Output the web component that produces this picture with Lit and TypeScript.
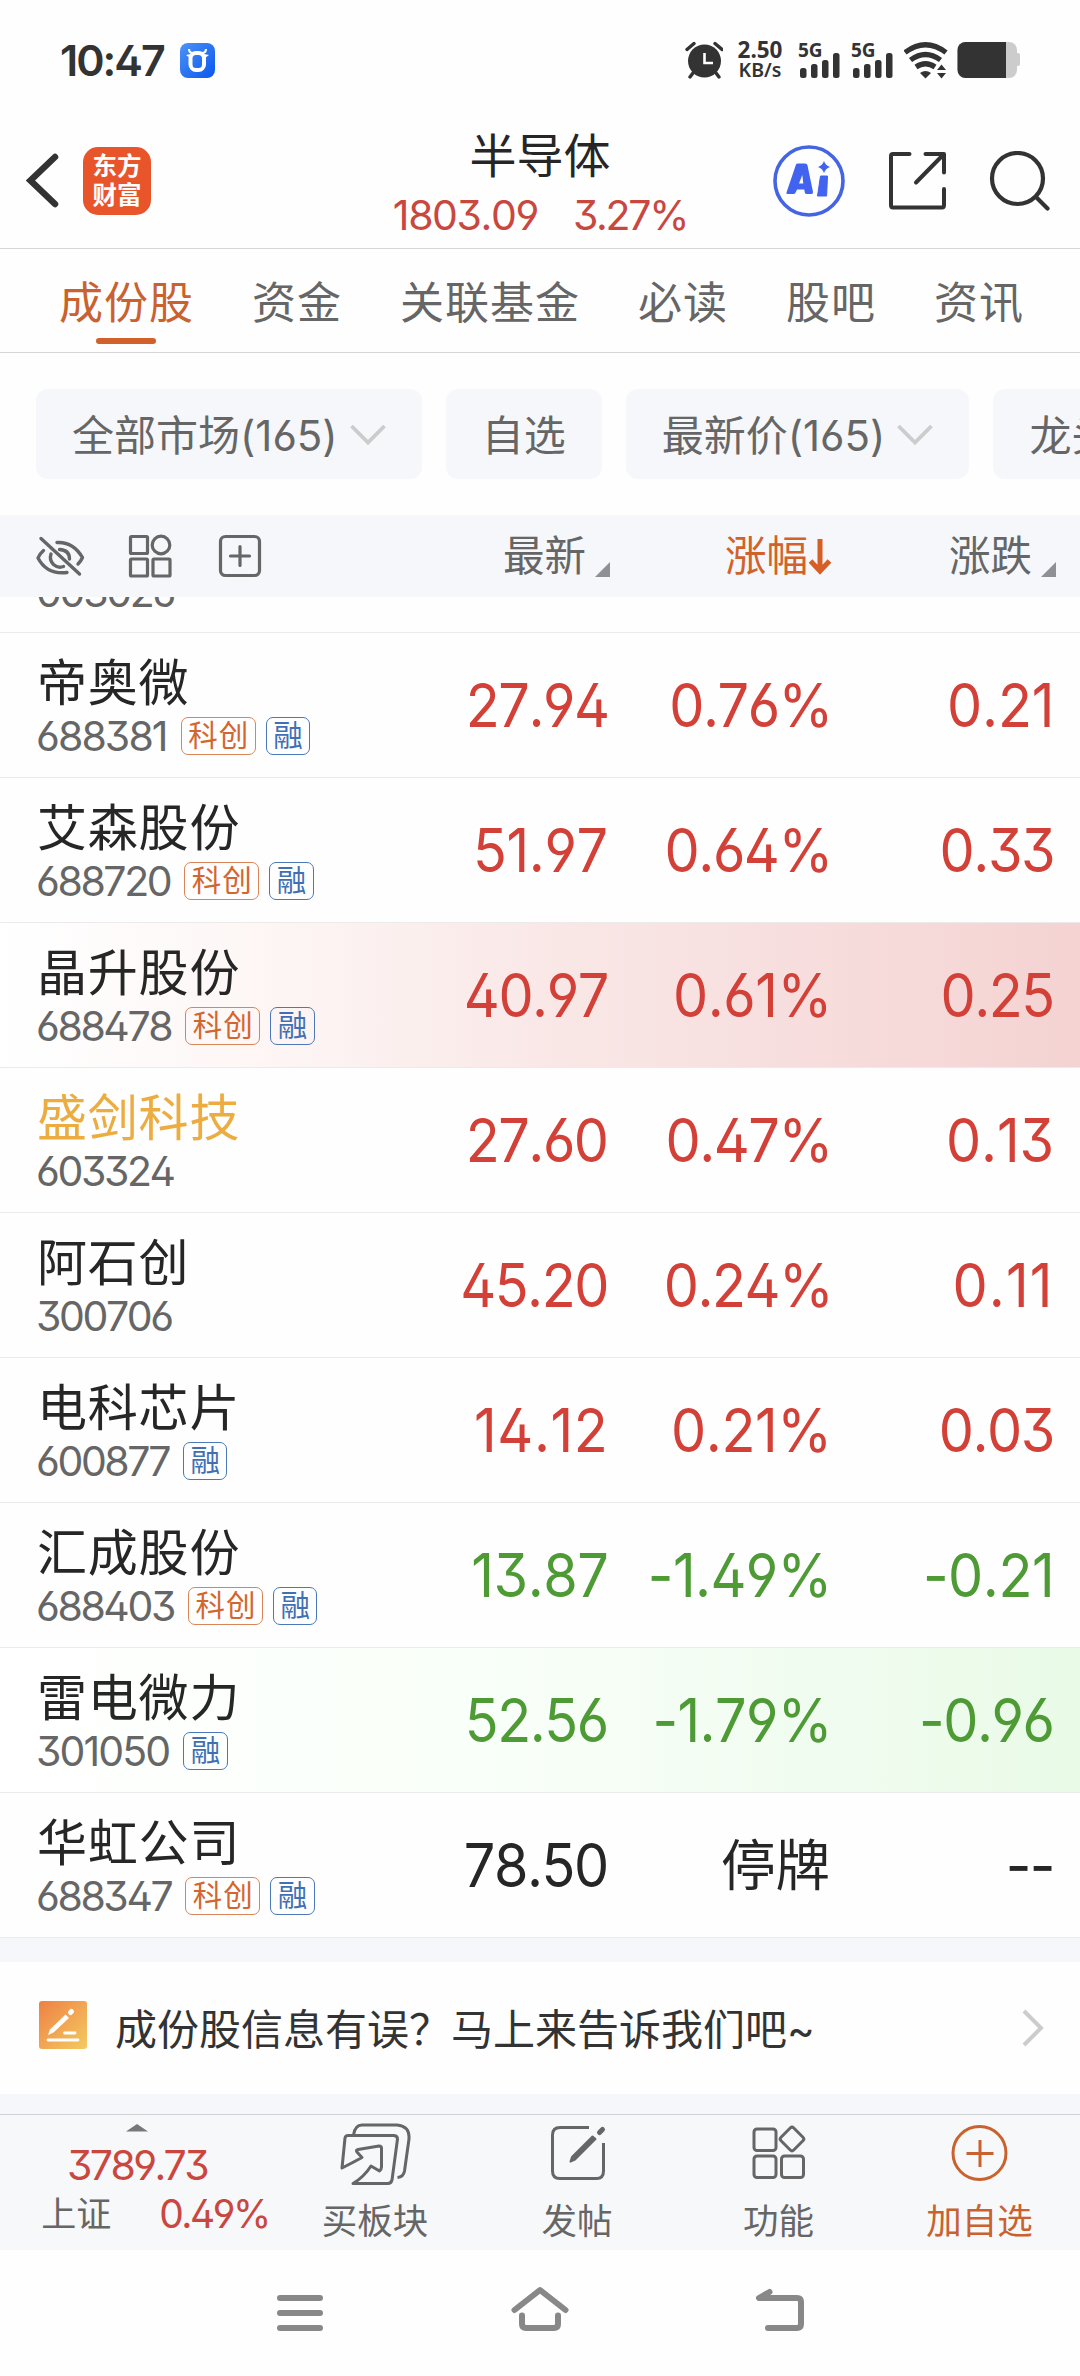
import { LitElement, html, css, svg, nothing } from "lit";
import { customElement, property } from "lit/decorators.js";
import { classMap } from "lit/directives/class-map.js";
import { styleMap } from "lit/directives/style-map.js";

type Trend = "up" | "down" | "flat";

interface Stock {
  name: string;
  code: string;
  tags: string[];
  price: string;
  percent: string;
  change: string;
  trend: Trend;
  watched?: boolean;
  flash?: boolean;
}

const STOCKS: Stock[] = [
  { name: "帝奥微", code: "688381", tags: ["科创", "融"], price: "27.94", percent: "0.76%", change: "0.21", trend: "up" },
  { name: "艾森股份", code: "688720", tags: ["科创", "融"], price: "51.97", percent: "0.64%", change: "0.33", trend: "up" },
  { name: "晶升股份", code: "688478", tags: ["科创", "融"], price: "40.97", percent: "0.61%", change: "0.25", trend: "up", flash: true },
  { name: "盛剑科技", code: "603324", tags: [], price: "27.60", percent: "0.47%", change: "0.13", trend: "up", watched: true },
  { name: "阿石创", code: "300706", tags: [], price: "45.20", percent: "0.24%", change: "0.11", trend: "up" },
  { name: "电科芯片", code: "600877", tags: ["融"], price: "14.12", percent: "0.21%", change: "0.03", trend: "up" },
  { name: "汇成股份", code: "688403", tags: ["科创", "融"], price: "13.87", percent: "-1.49%", change: "-0.21", trend: "down" },
  { name: "雷电微力", code: "301050", tags: ["融"], price: "52.56", percent: "-1.79%", change: "-0.96", trend: "down", flash: true },
  { name: "华虹公司", code: "688347", tags: ["科创", "融"], price: "78.50", percent: "停牌", change: "--", trend: "flat" },
];

const TABS = ["成份股", "资金", "关联基金", "必读", "股吧", "资讯"];

const FILTERS = [
  { label: "全部市场(165)", menu: true },
  { label: "自选", menu: false },
  { label: "最新价(165)", menu: true },
  { label: "龙头股", menu: false },
];

// The figure "1" is set narrow, so strings that hold it are tracked wider.
const tracking = (text: string, start: number, perOne: number) => {
  const ones = text.split("1").length - 1;
  return { letterSpacing: `${(start + (perOne * ones) / text.length).toFixed(2)}px` };
};

const base = css`
  :host {
    display: block;
    font-family: Inter, "Noto Sans CJK SC", sans-serif;
    font-feature-settings: "ss01", "calt" 0;
    font-kerning: none;
  }
  * {
    box-sizing: border-box;
  }
  svg {
    display: block;
    flex: none;
  }
`;

@customElement("status-bar")
class StatusBar extends LitElement {
  static styles = [
    base,
    css`
      .bar {
        height: 120px;
        display: flex;
        align-items: center;
        padding: 0 60px 0 60px;
        color: #333;
      }
      .time {
        font-size: 43px;
        font-weight: 600;
        letter-spacing: -2px;
        width: 120px;
        white-space: nowrap;
      }
      .right {
        margin-left: auto;
        display: flex;
        align-items: center;
      }
      .speed {
        width: 48px;
        margin: 0 14px 0 13px;
        display: flex;
        flex-direction: column;
        align-items: center;
        font-weight: 700;
        font-family: "Noto Sans", sans-serif;
        line-height: 20px;
        font-size: 22.5px;
      }
      .unit {
        font-size: 19.5px;
        font-weight: 600;
      }
      .cell {
        font-family: "Noto Sans", sans-serif;
        font-weight: 700;
        font-size: 19px;
        overflow: visible;
      }
    `,
  ];

  private signal() {
    return html`<svg class="cell" width="53" height="38" viewBox="798 41 53 38">
      <text x="798" y="56.500" fill="#333">5G</text>
      <g fill="#333">
        <rect x="800" y="68" width="6.5" height="10" rx="2.5" />
        <rect x="811" y="64" width="6.5" height="14" rx="2.5" />
        <rect x="822" y="60" width="6.5" height="18" rx="2.5" />
        <rect x="833" y="53" width="6.5" height="25" rx="2.5" />
      </g>
    </svg>`;
  }

  render() {
    return html`<div class="bar">
      <span class="time">10:47</span>
      <svg width="35" height="35" viewBox="0 0 35 35">
        <defs>
          <linearGradient id="g" x1="0" y1="0" x2="1" y2="1">
            <stop offset="0" stop-color="#4c93f8" />
            <stop offset="1" stop-color="#0a57ee" />
          </linearGradient>
        </defs>
        <rect width="35" height="35" rx="8" fill="url(#g)" />
        <rect x="10.5" y="10" width="13.5" height="17" rx="5.5" fill="none" stroke="#fff" stroke-width="4" />
        <path d="M9 6 Q9 10 13 10 M26 6 Q26 10 22 10" stroke="#fff" stroke-width="2.2" fill="none" />
        <path d="M6 12 L11 11 L10 15 Z M29 12 L24 11 L25 15 Z" fill="#fff" />
      </svg>
      <div class="right">
        <svg width="38" height="38" viewBox="684 41 38 38">
          <circle cx="703.5" cy="61" r="16.5" fill="#333" />
          <path d="M703.5 53 V63 H712" stroke="#fff" stroke-width="2.6" fill="none" />
          <path d="M686 49.5 L693 43.5 M721 49.5 L714 43.5 M692 73 L689 77 M715 73 L718 77" stroke="#333" stroke-width="3.4" stroke-linecap="round" />
        </svg>
        <div class="speed"><span>2.50</span><span class="unit">KB/s</span></div>
        ${this.signal()}${this.signal()}
        <svg width="116" height="38" viewBox="904 41 116 38">
          <g fill="none" stroke="#333" stroke-width="5.2">
            <path d="M905 52.500 Q925.500 37 946 52.500" />
            <path d="M910.500 60 Q925.500 49 940.500 60" />
            <path d="M916 67 Q925.500 60.500 935 67" />
          </g>
          <path d="M920 73 Q925.500 69 931 73 L925.500 78.500 Z" fill="#333" />
          <path d="M937 70 L941.500 64.500 L946 70 Z M937 73 L941.500 78.500 L946 73 Z" fill="#333" />
          <rect x="957.500" y="42" width="59.500" height="36" rx="8" fill="#ccc" />
          <rect x="1015" y="53" width="5" height="13" rx="2" fill="#ccc" />
          <path d="M1006 42 V78 H965.500 a8 8 0 0 1 -8 -8 V50 a8 8 0 0 1 8 -8 Z" fill="#333" />
        </svg>
      </div>
    </div>`;
  }
}

@customElement("board-header")
class BoardHeader extends LitElement {
  static styles = [
    base,
    css`
      .bar {
        height: 129px;
        border-bottom: 1px solid #d6d6d6;
        display: grid;
        grid-template-columns: 1fr auto 1fr;
        align-items: center;
      }
      .left {
        display: flex;
        align-items: center;
        padding: 0 0 6px 26px;
        gap: 23px;
      }
      .logo {
        width: 68px;
        height: 68px;
        border-radius: 15px;
        background: #e9552b;
        color: #fff;
        font-size: 24.5px;
        line-height: 29px;
        font-weight: 700;
        display: flex;
        flex-direction: column;
        align-items: center;
        justify-content: center;
      }
      .mid {
        display: flex;
        flex-direction: column;
        align-items: center;
        padding-top: 2px;
      }
      .title {
        font-size: 47px;
        line-height: 58px;
        color: #262626;
      }
      .quote {
        display: flex;
        gap: 35px;
        color: #c9473f;
        font-size: 41px;
        line-height: 56px;
        letter-spacing: -1.4px;
        margin-top: 2px;
      }
      .gain {
        letter-spacing: -2.3px;
      }
      .right {
        display: flex;
        justify-content: flex-end;
        align-items: center;
        padding: 0 29px 6px 0;
        gap: 43px;
      }
    `,
  ];

  render() {
    return html`<div class="bar">
      <div class="left">
        <svg width="34" height="60" viewBox="26 152 34 60">
          <path d="M55 158 L30.500 181.500 L55 205" fill="none" stroke="#333" stroke-width="6.500" stroke-linecap="round" />
        </svg>
        <div class="logo"><span>东方</span><span>财富</span></div>
      </div>
      <div class="mid">
        <span class="title">半导体</span>
        <div class="quote"><span>1803.09</span><span class="gain">3.27%</span></div>
      </div>
      <div class="right">
        <svg width="72" height="72" viewBox="0 0 72 72">
          <circle cx="36" cy="36" r="34" fill="none" stroke="#4464e4" stroke-width="3.6" />
          <g fill="#4163f0">
            <path fill-rule="evenodd" d="M14 46 L23 19.500 Q23.500 18.500 25 18.500 H32 Q34 18.500 34.400 20 L40 47 Q40.300 49 38.500 49 H34 Q32 49 31.800 47.500 L31.300 44.500 H24 L22.600 47.500 Q22 49 20.300 49 H14.500 Q12.700 49 14 46 Z M26 38.500 H30.300 L29.300 30 Z" />
            <path d="M47.500 31 H54.500 L53.600 51 H44.500 Z" stroke="#4163f0" stroke-width="1" stroke-linejoin="round" />
            <path d="M51 16 Q52.500 20.500 57 22 Q52.500 23.500 51 28 Q49.500 23.500 45 22 Q49.500 20.500 51 16 Z" />
          </g>
        </svg>
        <svg width="58" height="60" viewBox="887 152 58 60">
          <g fill="none" stroke="#333" stroke-width="4" stroke-linecap="round" stroke-linejoin="round">
            <path d="M908.500 155 H892 Q890 155 890 157 V206 Q890 208.500 892 208.500 H941 Q943 208.500 943 206 V190" />
            <path d="M924.500 155 H943 V173.500 M942 156 L915 183.500" />
          </g>
        </svg>
        <svg width="62" height="60" viewBox="990 151 62 60">
          <g fill="none" stroke="#333" stroke-width="4.200" stroke-linecap="round">
            <circle cx="1018.500" cy="178.500" r="25.500" />
            <path d="M1037 197 L1048.500 208.500" />
          </g>
        </svg>
      </div>
    </div>`;
  }
}

@customElement("board-filters")
class BoardFilters extends LitElement {
  static styles = [
    base,
    css`
      .tabs {
        height: 104px;
        display: flex;
        gap: 58px;
        padding-left: 59px;
        border-bottom: 1px solid #d6d6d6;
        white-space: nowrap;
      }
      .tab {
        display: flex;
        flex-direction: column;
        align-items: center;
        font-size: 44px;
        letter-spacing: 1px;
        line-height: 64px;
        padding-top: 22px;
        color: #666;
      }
      .active {
        color: #c9622f;
      }
      .active::after {
        content: "";
        width: 60px;
        height: 6px;
        border-radius: 3px;
        background: #d2602b;
        margin: 3px 2px 0 0;
      }
      .chips {
        display: flex;
        gap: 24px;
        padding: 36px 0 36px 36px;
        overflow: hidden;
      }
      .chip {
        flex: none;
        height: 90px;
        border-radius: 12px;
        background: #f6f7fa;
        padding: 3px 36px 0 36px;
        display: flex;
        align-items: center;
        gap: 12px;
        font-size: 42px;
        line-height: 60px;
        color: #666;
      }
      .label {
        white-space: nowrap;
      }
    `,
  ];

  render() {
    return html`
      <div class="tabs">
        ${TABS.map((t, i) => html`<div class=${classMap({ tab: true, active: i === 0 })}>${t}</div>`)}
      </div>
      <div class="chips">
        ${FILTERS.map(
          (f) => html`<div class="chip">
            <span class="label">${f.label}</span>
            ${f.menu
              ? html`<svg width="36" height="24" viewBox="0 0 36 24">
                  <path d="M1.500 2 L18 18.500 L34.500 2" fill="none" stroke="#ccc" stroke-width="3.800" />
                </svg>`
              : nothing}
          </div>`,
        )}
      </div>
    `;
  }
}

@customElement("stock-row")
class StockRow extends LitElement {
  @property({ attribute: false }) stock!: Stock;

  static styles = [
    base,
    css`
      .row {
        height: 145px;
        border-bottom: 1px solid #ebebec;
        display: grid;
        grid-template-columns: 420px 188px 224px 222px;
        align-items: center;
      }
      .flash-up {
        background: linear-gradient(90deg, #fff 0%, #fdf6f5 25%, #f9e8e7 50%, #f7dcdc 78%, #f4d3d2 100%);
      }
      .flash-down {
        background: linear-gradient(90deg, #fff 0%, #f9fff9 45%, #f1fcf0 75%, #e9fae7 100%);
      }
      .who {
        padding: 4px 0 4px 36px;
      }
      .name {
        font-size: 50px;
        letter-spacing: 0.8px;
        line-height: 56px;
        padding-left: 1px;
        color: #262626;
      }
      .watched {
        color: #ecac3f;
      }
      .meta {
        display: flex;
        align-items: center;
        gap: 10px;
        height: 40px;
        margin-top: 5px;
      }
      .code {
        font-size: 41px;
        line-height: 40px;
        color: #666;
        margin-right: 4px;
      }
      .tag {
        height: 38px;
        border: 1.5px solid #4a78b8;
        border-radius: 7px;
        color: #3f6fb5;
        font-size: 29.5px;
        letter-spacing: 1px;
        line-height: 34px;
        padding: 0 5.500px 0 6.500px;
        white-space: nowrap;
      }
      .star {
        color: #d3662f;
        border-color: #d98557;
      }
      .num {
        justify-self: end;
        font-size: 60px;
        line-height: 80px;
        transform: scaleX(0.93);
        transform-origin: right;
        white-space: nowrap;
      }
      .up {
        color: #d24037;
      }
      .down {
        color: #4e9b36;
      }
      .flat {
        color: #262626;
      }
      .halt {
        font-size: 54.500px;
        transform: none;
        margin-right: 2px;
      }
    `,
  ];

  render() {
    const s = this.stock;
    const cell = (text: string) =>
      html`<span
        class=${classMap({ num: true, [s.trend]: true, halt: text === "停牌" })}
        style=${styleMap(text === "停牌" ? {} : tracking(text, -1.6, 5.5))}
        >${text}</span
      >`;
    return html`<div class=${classMap({ row: true, "flash-up": !!s.flash && s.trend === "up", "flash-down": !!s.flash && s.trend === "down" })}>
      <div class="who">
        <div class=${classMap({ name: true, watched: !!s.watched })}>${s.name}</div>
        <div class="meta">
          <span class="code" style=${styleMap(tracking(s.code, -2.4, 3))}>${s.code}</span>
          ${s.tags.map((t) => html`<span class=${classMap({ tag: true, star: t === "科创" })}>${t}</span>`)}
        </div>
      </div>
      ${cell(s.price)}${cell(s.percent)}${cell(s.change)}
    </div>`;
  }
}

@customElement("stock-table")
class StockTable extends LitElement {
  static styles = [
    base,
    css`
      .head {
        height: 82px;
        background: #f6f7fa;
        display: grid;
        grid-template-columns: 420px 190px 222px 224px;
        align-items: center;
        font-size: 41.500px;
        line-height: 60px;
        color: #666;
      }
      .tools {
        display: flex;
        gap: 46px;
        padding-left: 35px;
      }
      .eye {
        margin-right: -3px;
      }
      .col {
        justify-self: end;
        display: flex;
        align-items: center;
        white-space: nowrap;
      }
      .sort {
        width: 0;
        height: 0;
        border-left: 15px solid transparent;
        border-bottom: 15px solid #8f9095;
        margin: 26px 0 0 9px;
      }
      .sorted {
        color: #d2622c;
      }
      .peek {
        height: 36px;
        overflow: hidden;
        display: flex;
        flex-direction: column;
        justify-content: flex-end;
        border-bottom: 1px solid #ebebec;
        padding: 0 0 20px 36px;
        font-size: 41px;
        line-height: 40px;
        letter-spacing: -2.3px;
        color: #666;
      }
    `,
  ];

  render() {
    return html`
      <div class="head">
        <div class="tools">
          <svg class="eye" width="50" height="44" viewBox="35 533 50 44">
            <g fill="none" stroke="#666" stroke-width="3.400" stroke-linecap="round" stroke-linejoin="round">
              <path d="M41 537.500 L79.500 573" />
              <path d="M57 541.500 Q73 540.500 82.500 556.500 Q81 560 78 563" />
              <path d="M43.500 549.500 Q39.500 553 38 557 Q47 574 67 571.500" />
              <path d="M51 553 Q49 559 53.500 563.500 Q58 567.500 63.500 565.500" />
              <path d="M59.500 548.500 Q69.500 549 69.500 558" />
            </g>
          </svg>
          <svg width="44" height="44" viewBox="128 533 44 44">
            <g fill="none" stroke="#666" stroke-width="3.200">
              <rect x="130.500" y="535.500" width="17" height="17" rx="1" />
              <circle cx="161" cy="544" r="8.800" />
              <rect x="130.500" y="558" width="17" height="17" rx="1" />
              <rect x="153" y="558" width="17" height="17" rx="1" />
            </g>
          </svg>
          <svg width="44" height="44" viewBox="218 533 44 44">
            <g fill="none" stroke="#666" stroke-width="3.200" stroke-linecap="round">
              <rect x="220.500" y="535.500" width="39" height="39" rx="5" />
              <path d="M240 545.500 V564.500 M230.500 555 H249.500" />
            </g>
          </svg>
        </div>
        <div class="col">最新<i class="sort"></i></div>
        <div class="col sorted">
          涨幅<svg width="24" height="40" viewBox="0 0 24 40">
            <path d="M12 3 V34 M2.500 25 L12 35 L21.500 25" fill="none" stroke="#d65f28" stroke-width="5" />
          </svg>
        </div>
        <div class="col">涨跌<i class="sort"></i></div>
      </div>
      <div class="peek">003026</div>
      ${STOCKS.map((s) => html`<stock-row .stock=${s}></stock-row>`)}
    `;
  }
}

@customElement("board-footer")
class BoardFooter extends LitElement {
  static styles = [
    base,
    css`
      .note {
        border-top: 24px solid #f6f7fa;
        border-bottom: 20px solid #f6f7fa;
        height: 176px;
        display: flex;
        align-items: center;
        padding: 0 35px 0 39px;
        font-size: 42px;
        color: #333;
      }
      .note-text {
        margin: 3px auto 0 28px;
        line-height: 60px;
        white-space: nowrap;
      }
      .pen {
        margin-bottom: 6px;
      }
      .bar {
        height: 136px;
        background: #f7f8fa;
        border-top: 1px solid #d0d2d6;
        display: grid;
        grid-template-columns: 274px 202px 202px 201px 201px;
        color: #666;
      }
      .index {
        display: flex;
        flex-direction: column;
        align-items: center;
        padding-top: 9px;
      }
      .value {
        color: #c9473f;
        font-size: 41px;
        line-height: 50px;
        letter-spacing: -2.600px;
        margin-top: 8px;
      }
      .pair {
        display: flex;
        align-items: center;
        gap: 48px;
        font-size: 35px;
        line-height: 50px;
        padding-left: 36px;
        margin-top: -1px;
      }
      .pct {
        color: #c9473f;
        font-size: 39px;
        letter-spacing: -2.500px;
      }
      .action {
        display: flex;
        flex-direction: column;
        align-items: center;
        font-size: 35.500px;
        line-height: 48px;
        padding-top: 5px;
      }
      .label {
        margin-top: 12px;
      }
      .add {
        color: #c9622f;
      }
      .keys {
        height: 126px;
        display: flex;
        justify-content: center;
        gap: 180px;
        padding-top: 33px;
      }
    `,
  ];

  private icons = [
    svg`<path d="M353.500 2136 Q355 2126 362 2126 H397 Q410 2127 409 2140 L404.500 2172 Q403.500 2178 397.500 2178.500" />
      <path d="M348 2136.500 H394 Q397.500 2137 397.500 2140 L392 2181 Q391 2184.500 388 2184.500 H353 Q364 2178 371 2167 L379.500 2172 Q381.500 2170 381.500 2168 V2149 Q381.500 2147 379 2147 L358 2150.500 Q355.500 2151 357 2153 L362 2158.500 Q352 2164 342 2169 L345 2139 Q345.500 2136.500 348 2136.500 Z" />`,
    svg`<path d="M588 2128.500 H559 Q551.500 2128.500 551.500 2136 V2172 Q551.500 2179.500 559 2179.500 H595.500 Q602.500 2179.500 602.500 2172 V2144" />
      <path d="M594.500 2140 L574 2160.500 L569.500 2162.500 L571 2158 L591.500 2137.500 Z" stroke-width="2" fill="#666" />
      <path d="M598.500 2133.500 L601.500 2130.500" stroke-width="5" stroke-linecap="round" />`,
    svg`<rect x="753.500" y="2130" width="22" height="21.500" rx="3" />
      <rect x="753.500" y="2157" width="22" height="21.500" rx="3" />
      <rect x="781" y="2157" width="22" height="21.500" rx="3" />
      <rect x="782.500" y="2131" width="18" height="18" rx="2.500" transform="rotate(45 791.500 2140)" />`,
    svg`<circle cx="979" cy="2154" r="26.500" /><path d="M979.500 2141 V2168 M966 2154.500 H993" />`,
  ];

  render() {
    const actions = [
      { label: "买板块", x: 340, add: false },
      { label: "发帖", x: 541, add: false },
      { label: "功能", x: 742.5, add: false },
      { label: "加自选", x: 943.5, add: true },
    ];
    return html`
      <div class="note">
        <svg class="pen" width="48" height="48" viewBox="0 0 48 48">
          <defs>
            <linearGradient id="p" x1="0" y1="0" x2="1" y2="1">
              <stop offset="0" stop-color="#ee8045" />
              <stop offset="1" stop-color="#f4cb60" />
            </linearGradient>
          </defs>
          <rect width="48" height="48" rx="3" fill="url(#p)" />
          <path d="M9 34 L11 28.500 L26.500 13.500 L30 17 L14.500 31.500 Z" fill="#fff" />
          <path d="M31.500 11.500 L32.500 10.500" stroke="#fff" stroke-width="5" stroke-linecap="round" />
          <path d="M25.500 32 H36 M9 39 H39" stroke="#fff" stroke-width="2.800" stroke-linecap="round" />
        </svg>
        <span class="note-text">成份股信息有误？马上来告诉我们吧~</span>
        <svg width="23" height="38" viewBox="0 0 23 38">
          <path d="M2 2 L19 19 L2 36" fill="none" stroke="#ccc" stroke-width="4" />
        </svg>
      </div>
      <div class="bar">
        <div class="index">
          <svg width="22" height="8" viewBox="0 0 22 8"><path d="M0 7.500 L11 0 L22 7.500 Z" fill="#77787c" /></svg>
          <span class="value">3789.73</span>
          <div class="pair"><span>上证</span><span class="pct">0.49%</span></div>
        </div>
        ${actions.map(
          (a, i) => html`<div class=${classMap({ action: true, add: a.add })}>
            <svg width="71" height="66" viewBox="${a.x} 2121 71 66" fill="none" stroke=${a.add ? "#c9622f" : "#666"} stroke-width="3" stroke-linejoin="round">
              ${this.icons[i]}
            </svg>
            <span class="label">${a.label}</span>
          </div>`,
        )}
      </div>
      <div class="keys">
        <svg width="60" height="56" viewBox="270 2283 60 56">
          <path d="M280 2298 H320 M280 2313 H320 M280 2328 H320" stroke="#888" stroke-width="6" stroke-linecap="round" />
        </svg>
        <svg width="60" height="56" viewBox="510 2283 60 56">
          <g fill="none" stroke="#888" stroke-width="6" stroke-linecap="round" stroke-linejoin="round">
            <path d="M514.500 2310 L540 2290 L565.500 2310" />
            <path d="M522 2315.500 V2324 Q522 2328 526 2328 H554 Q558 2328 558 2324 V2315.500" />
          </g>
        </svg>
        <svg width="60" height="56" viewBox="750 2283 60 56">
          <path d="M769.500 2292 L759 2298 H797 Q801 2298 801 2302 V2324 Q801 2328 797 2328 H768" fill="none" stroke="#888" stroke-width="6" stroke-linecap="round" stroke-linejoin="round" />
        </svg>
      </div>
    `;
  }
}

@customElement("app-root")
class AppRoot extends LitElement {
  static styles = css`
    :host {
      display: block;
      width: 1080px;
      height: 2376px;
      overflow: hidden;
      background: #fefefe;
    }
  `;

  render() {
    return html`
      <status-bar></status-bar>
      <board-header></board-header>
      <board-filters></board-filters>
      <stock-table></stock-table>
      <board-footer></board-footer>
    `;
  }
}
